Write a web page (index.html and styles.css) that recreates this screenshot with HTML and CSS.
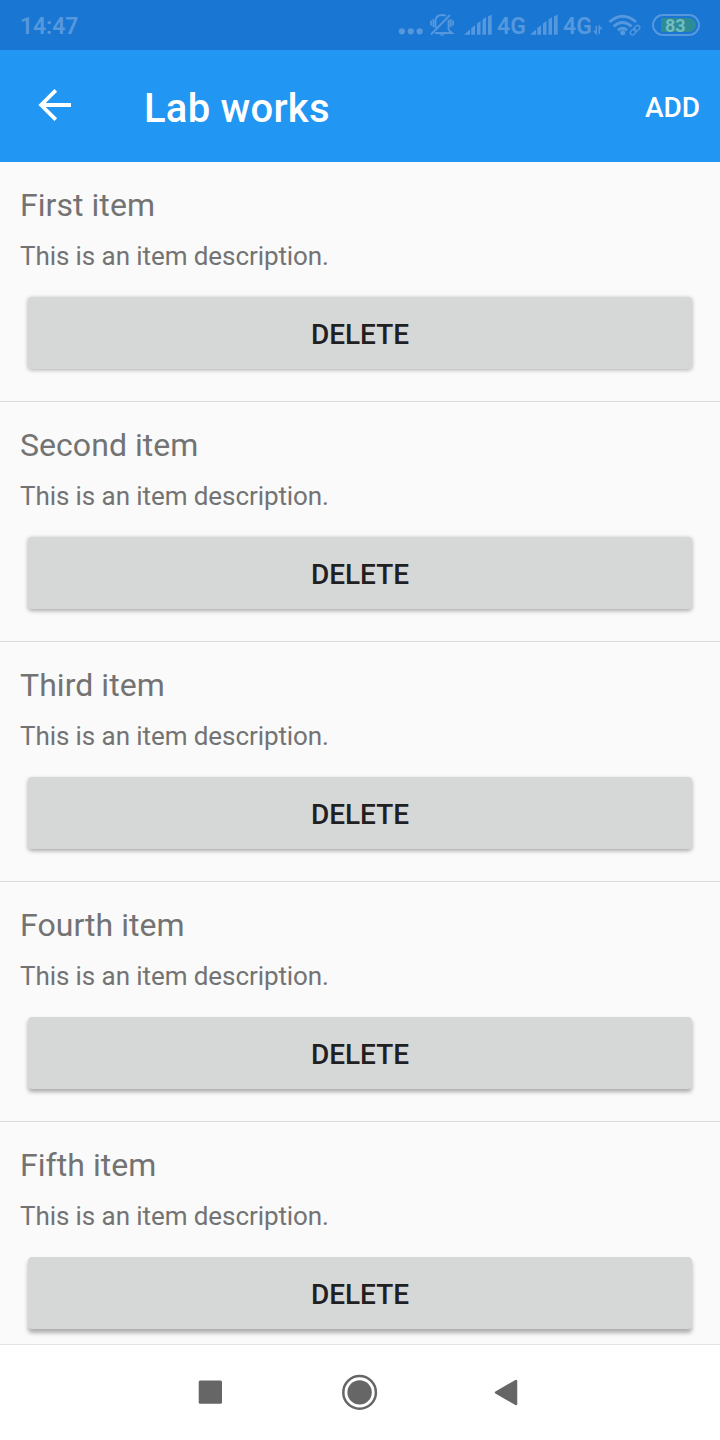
FILE: index.html
```html
<!DOCTYPE html>
<html lang="en">
<head>
<meta charset="utf-8">
<title>Lab works</title>
<link rel="stylesheet" href="styles.css">
</head>
<body>
<div class="screen">
  <header class="status-bar">
    <span class="clock">14:47</span>
    <div class="status-icons">
      <svg class="dots" width="26" height="50" viewBox="398 0 26 50" fill="currentColor"><circle cx="401.9" cy="31.3" r="3.1"/><circle cx="410.8" cy="31.3" r="3.1"/><circle cx="419.6" cy="31.3" r="3.1"/></svg>
      <svg class="bell" width="26" height="50" viewBox="429 0 26 50" fill="none" stroke="currentColor" stroke-width="1.800"><path d="M450 15 431 34.500M435.500 28V21.500Q435.500 15 442 15Q444.500 15 446 16M448.500 20V29Q449 31 452 33H435M431 20.500v5M433.400 19v8M450.600 19v8M453 20.500v5"/><path d="M439 34.300h6q-3 3-6 0" fill="currentColor" stroke="none"/></svg>
      <svg class="signal" width="28" height="50" viewBox="464 0 28 50" fill="currentColor"><path d="M464 34.700 470 29.500V34.700ZM471.300 28l3.700-2.700v9.400h-3.700ZM477 23.500 480.500 21v13.700h-3.500ZM482.500 19.500 486 17.300v17.400h-3.500ZM488 16.500 491.700 14.500v20.200h-3.700Z"/></svg>
      <span class="network">4G</span>
      <svg class="signal" width="28" height="50" viewBox="464 0 28 50" fill="currentColor"><path d="M464 34.700 470 29.500V34.700ZM471.300 28l3.700-2.700v9.400h-3.700ZM477 23.500 480.500 21v13.700h-3.500ZM482.500 19.500 486 17.300v17.400h-3.500ZM488 16.500 491.700 14.500v20.200h-3.700Z"/></svg>
      <span class="network">4G</span>
      <svg class="transfer" width="10" height="50" viewBox="593 0 10 50" fill="none" stroke="currentColor" stroke-width="1.500"><path d="M596.300 26v7.500l-2.500-2.800M599.300 34v-7.500l2.500 2.800"/></svg>
      <svg class="wifi" width="34" height="50" viewBox="608 0 34 50" fill="none" stroke="currentColor"><path d="M609.500 22Q622.700 10.500 636 22M613.700 26.300Q622.700 18.500 631.500 26.300M618 30.300Q622.700 26.300 627 30.300" stroke-width="2.900"/><circle cx="622.700" cy="32.700" r="2.500" fill="currentColor" stroke="none"/><g stroke-width="1.300" transform="rotate(-45 635 30.200)"><rect x="629.300" y="28" width="6.500" height="4.400" rx="2.200"/><rect x="634.400" y="28" width="6.500" height="4.400" rx="2.200"/></g></svg>
      <span class="battery"><span class="charge">83</span></span>
    </div>
  </header>
  <nav class="toolbar">
    <svg class="back" width="34" height="34" viewBox="0 0 34 34" fill="none" stroke="#fff" stroke-width="3.800"><path d="M33 17H3.500M17.800 2.300 3.100 17 17.800 31.700"/></svg>
    <h1>Lab works</h1>
    <button class="add">ADD</button>
  </nav>
  <main class="list">
    <section class="item"><h2>First item</h2><p>This is an item description.</p><button class="delete">DELETE</button></section>
    <section class="item"><h2>Second item</h2><p>This is an item description.</p><button class="delete">DELETE</button></section>
    <section class="item"><h2>Third item</h2><p>This is an item description.</p><button class="delete">DELETE</button></section>
    <section class="item"><h2>Fourth item</h2><p>This is an item description.</p><button class="delete">DELETE</button></section>
    <section class="item"><h2>Fifth item</h2><p>This is an item description.</p><button class="delete">DELETE</button></section>
  </main>
  <footer class="nav-bar">
    <svg width="24" height="24" viewBox="0 0 24 24"><rect x=".7" y=".5" width="23.300" height="23.300" rx="1.500" fill="#666"/></svg>
    <svg class="home" width="36" height="36" viewBox="0 0 36 36"><circle cx="17.600" cy="18.400" r="16.300" fill="none" stroke="#666" stroke-width="2.500"/><circle cx="17.600" cy="18.400" r="12.200" fill="#666"/></svg>
    <svg width="24" height="28" viewBox="0 0 24 28"><path d="M2 14.500 22 3V26Z" fill="#666" stroke="#666" stroke-width="2.500" stroke-linejoin="round"/></svg>
  </footer>
</div>
</body>
</html>
```
FILE: styles.css
```css
* { box-sizing: border-box; }
body { margin: 0; font-family: Roboto, "Liberation Sans", sans-serif; }
button { border: 0; padding: 0; font: 500 28px/36px Roboto, "Liberation Sans", sans-serif; }
svg { display: block; flex: none; }
h1, h2, p { margin: 0; }
.screen { width: 720px; height: 1440px; display: flex; flex-direction: column; overflow: hidden; background: #fafafa; }
.status-bar { flex: none; height: 50px; padding: 0 20px; display: flex; justify-content: space-between; background: #1976d2; color: #5598dd; }
.clock { font-size: 23px; line-height: 54px; font-weight: 600; letter-spacing: -.1px; }
.status-icons { display: flex; align-items: center; width: 302px; }
.bell { margin-left: 5px; }
.signal { margin-left: 9px; }
.network { width: 28px; margin-left: 5px; font-size: 23px; line-height: 54px; font-weight: 600; height: 50px; }
.network + .signal { margin-left: 5px; }
.transfer { margin-left: 2px; }
.wifi { margin-left: 5px; }
.battery { margin-left: auto; width: 48px; height: 22px; padding: 2px; border: 2px solid #5598dd; border-radius: 11px; display: flex; justify-content: flex-end; margin-bottom: 1px; }
.charge { width: 35px; height: 14px; border-radius: 1px 7px 7px 1px; background: #2e8b98; color: #71bec0; font-size: 18px; line-height: 15px; font-weight: 700; padding-left: 4px; }
.toolbar { flex: none; height: 112px; padding: 0 20px 0 38px; display: flex; align-items: center; background: #2196f3; color: #fff; }
.back { margin-bottom: 2px; }
h1 { flex: 1; margin-left: 72px; font-size: 40px; line-height: 48px; font-weight: 500; letter-spacing: .25px; padding-top: 6px; }
.add { background: none; color: #fff; padding-top: 4px; }
.list { flex: none; height: 1182px; overflow: hidden; }
.item { height: 240px; padding: 24px 20px 0; display: flex; flex-direction: column; border-bottom: 1px solid #dadada; color: #737373; }
.item h2 { font-size: 32px; line-height: 38px; font-weight: 400; letter-spacing: .05px; }
.item p { margin-top: 16px; font-size: 26px; line-height: 32px; letter-spacing: -.08px; }
.delete { margin: 25px 8px 0; height: 72px; border-radius: 4px; background: #d6d8d7; color: #1f201f; padding-top: 3px; box-shadow: 0 1px 4px rgba(0,0,0,.32); }
.item:nth-child(2) .delete { box-shadow: 0 1.5px 4px rgba(0,0,0,.32); }
.item:nth-child(3) .delete { box-shadow: 0 2px 4px rgba(0,0,0,.33); }
.item:nth-child(4) .delete { box-shadow: 0 3px 4px rgba(0,0,0,.32); }
.item:nth-child(5) .delete { box-shadow: 0 4px 4px rgba(0,0,0,.3); }
.nav-bar { flex: 1; display: flex; align-items: center; justify-content: space-between; padding: 0 202px 2px 198px; background: #fff; border-top: 1px solid #e3e3e3; }
.home { margin-left: 3px; }
```
